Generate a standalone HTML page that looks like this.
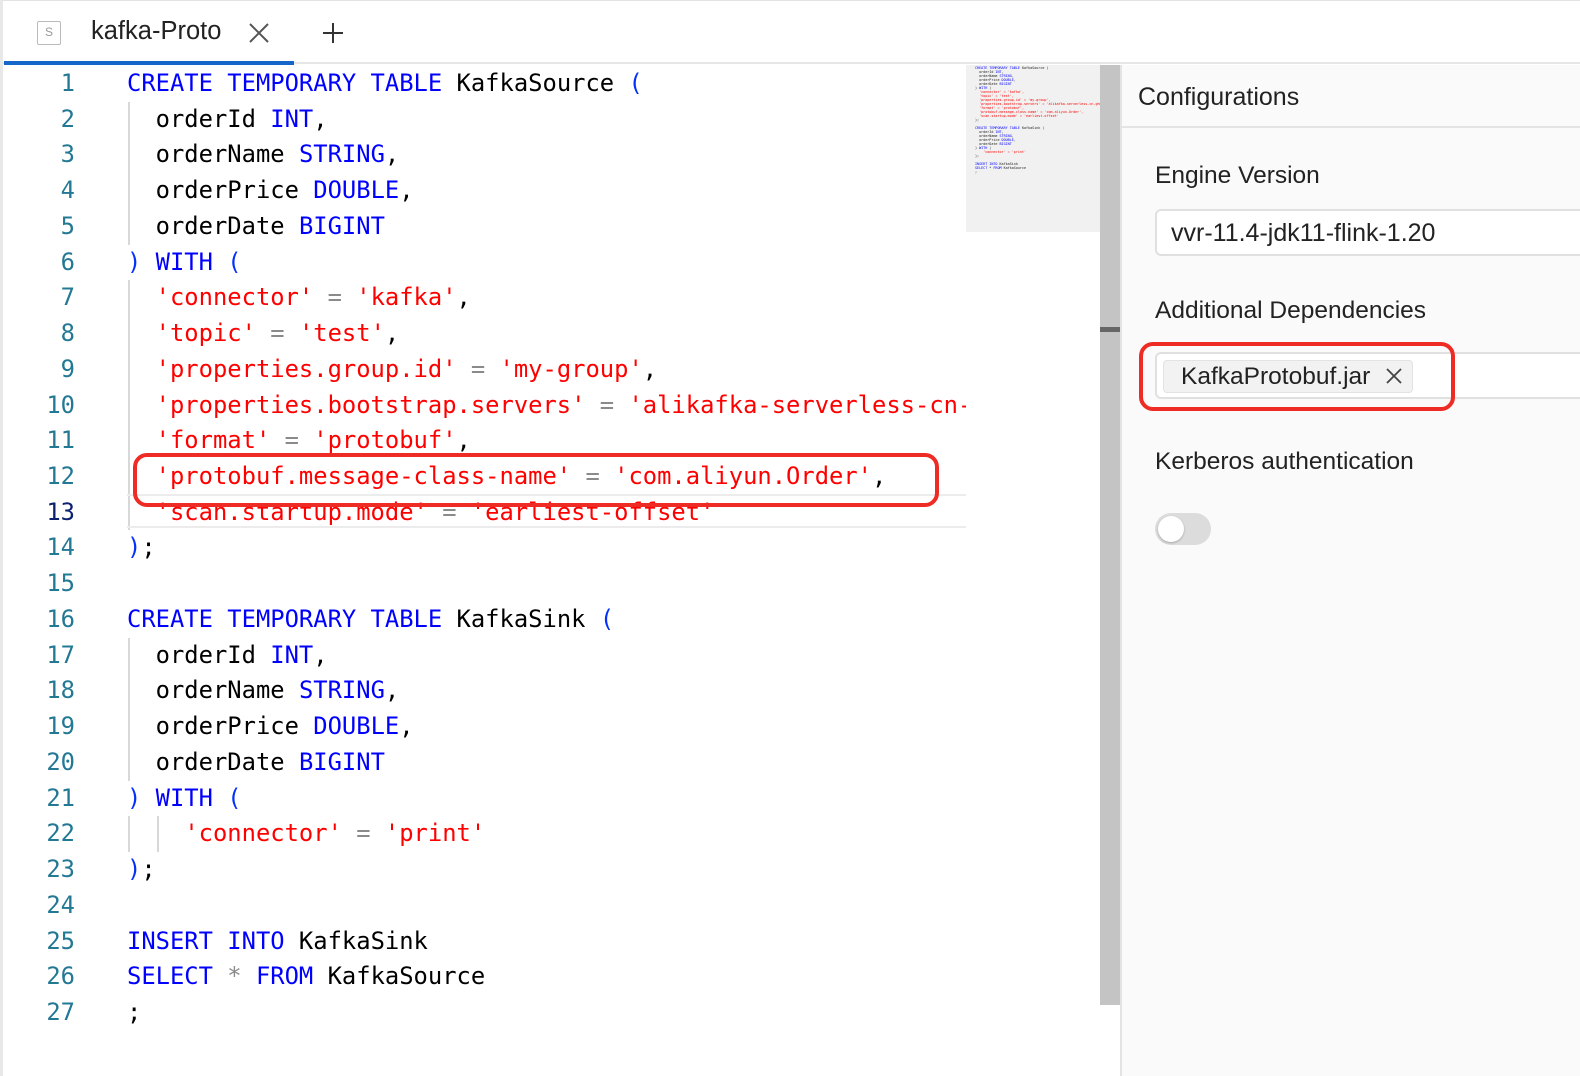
<!DOCTYPE html>
<html><head><meta charset="utf-8"><style>
*{margin:0;padding:0;box-sizing:border-box}
body{width:1580px;height:1076px;background:#fff;position:relative;overflow:hidden;font-family:"Liberation Sans",sans-serif}
.tabbar{position:absolute;left:3px;top:0;width:1577px;height:64px;background:#fff;border-bottom:2px solid #e6e6e6;border-top:1px solid #e3e3e3}
.lb{position:absolute;left:0;top:0;width:3px;height:1076px;background:#e8e8e8}
.ul{position:absolute;left:4px;top:61px;width:290px;height:4px;background:#1467c9}
.code{position:absolute;left:0;top:65px;width:966px;height:1011px;font-family:"DejaVu Sans Mono","Liberation Mono",monospace;font-size:23.8px;overflow:hidden}
.ln{position:absolute;left:0;width:75px;text-align:right;color:#237893}
.tx{position:absolute;left:127px;white-space:pre;color:#000}
.k{color:#0000ff}.s{color:#f00}.p{color:#0431fa}.o{color:#8a8a8a}
.guide{position:absolute;width:2px;background:#d8d8d8}
.mini{position:absolute;left:966px;top:65px;width:134px;height:167px;background:#f1f1f1;overflow:hidden;font-family:"DejaVu Sans Mono",monospace;font-size:3.4px;line-height:4px;padding:1px 0 0 9px;white-space:pre;color:#222}
.sb{position:absolute;left:1100px;top:65px;width:20px;height:940px;background:#c4c4c4}
.panel{position:absolute;left:1120px;top:65px;width:460px;height:1011px;background:#fafafa;border-left:2px solid #e4e4e4}
.lbl{position:absolute;left:33px;font-size:24.5px;color:#222}
.red{position:absolute;border:4px solid #ee2b24;border-radius:14px}
</style></head><body>
<div class="lb"></div>
<div class="tabbar">
 <div style="position:absolute;left:34px;top:20px;width:24px;height:24px;border:1.5px solid #bbb;border-radius:2px;font-size:12px;color:#999;text-align:center;line-height:21px">S</div>
 <div style="position:absolute;left:88px;top:16px;font-size:25.5px;color:#222">kafka-Proto</div>
 <svg style="position:absolute;left:245px;top:21px" width="22" height="22"><path d="M2 2L20 20M20 2L2 20" stroke="#555" stroke-width="2"/></svg>
 <svg style="position:absolute;left:318px;top:20px" width="24" height="24"><path d="M12 2V22M2 12H22" stroke="#333" stroke-width="2"/></svg>
</div>
<div class="ul"></div>
<div class="code" id="code"></div>
<div style="position:absolute;left:127px;top:494px;width:839px;height:34px;border-top:2px solid #ececec;border-bottom:2px solid #ececec"></div>
<div class="mini"><span class="k">CREATE TEMPORARY TABLE</span> KafkaSource (
  orderId <span class="k">INT</span>,
  orderName <span class="k">STRING</span>,
  orderPrice <span class="k">DOUBLE</span>,
  orderDate <span class="k">BIGINT</span>
) <span class="k">WITH</span> (
  <span class="s">'connector' = 'kafka',</span>
  <span class="s">'topic' = 'test',</span>
  <span class="s">'properties.group.id' = 'my-group',</span>
  <span class="s">'properties.bootstrap.servers' = 'alikafka-serverless-cn-gh0</span>
  <span class="s">'format' = 'protobuf',</span>
  <span class="s">'protobuf.message-class-name' = 'com.aliyun.Order',</span>
  <span class="s">'scan.startup.mode' = 'earliest-offset'</span>
);

<span class="k">CREATE TEMPORARY TABLE</span> KafkaSink (
  orderId <span class="k">INT</span>,
  orderName <span class="k">STRING</span>,
  orderPrice <span class="k">DOUBLE</span>,
  orderDate <span class="k">BIGINT</span>
) <span class="k">WITH</span> (
    <span class="s">'connector' = 'print'</span>
);

<span class="k">INSERT INTO</span> KafkaSink
<span class="k">SELECT</span> * <span class="k">FROM</span> KafkaSource
;</div>
<div class="sb"><div style="position:absolute;left:0;top:262px;width:20px;height:5px;background:#666"></div></div>
<div class="panel">
 <div style="position:absolute;left:16px;top:18px;font-size:25px;color:#222">Configurations</div>
 <div style="position:absolute;left:0;top:61px;width:460px;height:2px;background:#e4e4e4"></div>
 <div class="lbl" style="top:97px">Engine Version</div>
 <div style="position:absolute;left:33px;top:144px;width:440px;height:47px;border:2px solid #e0e0e0;border-radius:6px;background:#fff;font-size:25px;color:#222;padding:8px 0 0 14px">vvr-11.4-jdk11-flink-1.20</div>
 <div class="lbl" style="top:232px">Additional Dependencies</div>
 <div style="position:absolute;left:33px;top:287px;width:440px;height:47px;border:2px solid #e0e0e0;border-radius:6px;background:#fff">
  <div style="position:absolute;left:6px;top:6px;width:250px;height:33px;background:#f2f2f2;border:1px solid #e3e3e3;border-radius:4px;font-size:24.5px;color:#222;padding:2px 0 0 17px">KafkaProtobuf.jar</div>
  <svg style="position:absolute;left:229px;top:14px" width="16" height="16"><path d="M1 1L15 15M15 1L1 15" stroke="#444" stroke-width="1.8"/></svg>
 </div>
 <div class="lbl" style="top:383px">Kerberos authentication</div>
 <div style="position:absolute;left:33px;top:448px;width:56px;height:32px;border-radius:16px;background:#dcdcdc"><div style="position:absolute;left:3px;top:3px;width:26px;height:26px;border-radius:13px;background:#fff;box-shadow:0 1px 2px rgba(0,0,0,.25)"></div></div>
</div>
<div class="red" style="left:133px;top:453px;width:806px;height:54px"></div>
<div class="red" style="left:1139px;top:342px;width:316px;height:69px"></div>
<script>
const L=[
'<span class="k">CREATE TEMPORARY TABLE</span> KafkaSource <span class="p">(</span>',
'  orderId <span class="k">INT</span>,',
'  orderName <span class="k">STRING</span>,',
'  orderPrice <span class="k">DOUBLE</span>,',
'  orderDate <span class="k">BIGINT</span>',
'<span class="p">)</span> <span class="k">WITH</span> <span class="p">(</span>',
'  <span class="s">\'connector\'</span> <span class="o">=</span> <span class="s">\'kafka\'</span>,',
'  <span class="s">\'topic\'</span> <span class="o">=</span> <span class="s">\'test\'</span>,',
'  <span class="s">\'properties.group.id\'</span> <span class="o">=</span> <span class="s">\'my-group\'</span>,',
'  <span class="s">\'properties.bootstrap.servers\'</span> <span class="o">=</span> <span class="s">\'alikafka-serverless-cn-gh0</span>',
'  <span class="s">\'format\'</span> <span class="o">=</span> <span class="s">\'protobuf\'</span>,',
'  <span class="s">\'protobuf.message-class-name\'</span> <span class="o">=</span> <span class="s">\'com.aliyun.Order\'</span>,',
'  <span class="s">\'scan.startup.mode\'</span> <span class="o">=</span> <span class="s">\'earliest-offset\'</span>',
'<span class="p">)</span>;',
'',
'<span class="k">CREATE TEMPORARY TABLE</span> KafkaSink <span class="p">(</span>',
'  orderId <span class="k">INT</span>,',
'  orderName <span class="k">STRING</span>,',
'  orderPrice <span class="k">DOUBLE</span>,',
'  orderDate <span class="k">BIGINT</span>',
'<span class="p">)</span> <span class="k">WITH</span> <span class="p">(</span>',
'    <span class="s">\'connector\'</span> <span class="o">=</span> <span class="s">\'print\'</span>',
'<span class="p">)</span>;',
'',
'<span class="k">INSERT INTO</span> KafkaSink',
'<span class="k">SELECT</span> <span class="o">*</span> <span class="k">FROM</span> KafkaSource',
';'];
let h='';const lh=35.73,t0=1;
L.forEach((s,i)=>{const y=t0+i*lh;h+=`<div class="ln" style="top:${y}px;${i==12?'color:#0b216f':''}">${i+1}</div><div class="tx" style="top:${y}px">${s}</div>`});
h+=`<div class="guide" style="left:128px;top:${t0+lh*1}px;height:${lh*4}px"></div>`;
h+=`<div class="guide" style="left:128px;top:${t0+lh*6}px;height:${lh*7}px"></div>`;
h+=`<div class="guide" style="left:128px;top:${t0+lh*16}px;height:${lh*4}px"></div>`;
h+=`<div class="guide" style="left:128px;top:${t0+lh*21}px;height:${lh}px"></div>`;
h+=`<div class="guide" style="left:157px;top:${t0+lh*21}px;height:${lh}px"></div>`;
document.getElementById('code').innerHTML=h;
document.querySelectorAll('.tx,.ln').forEach(e=>e.style.lineHeight=lh+'px');
</script>
</body></html>
